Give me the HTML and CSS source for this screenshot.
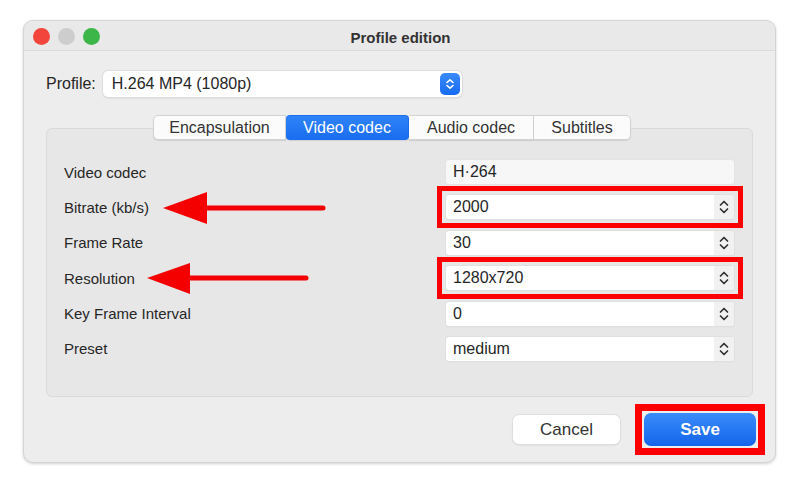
FILE: index.html
```html
<!DOCTYPE html>
<html lang="en">
<head>
    <meta charset="UTF-8">
    <meta name="viewport" content="width=device-width, initial-scale=1.0">
    <title>Profile edition</title>
    <link rel="stylesheet" href="styles.css">
</head>
<body>

    <!-- Dialog Window -->
    <div class="window">
        <div class="titlebar">
            <div class="lights">
                <span class="light red"></span>
                <span class="light gray"></span>
                <span class="light green"></span>
            </div>
            <span class="title">Profile edition</span>
        </div>

        <!-- Profile Select -->
        <div class="profile-row">
            <span class="profile-label">Profile:</span>
            <div class="profile-select">
                <span>H.264 MP4 (1080p)</span>
                <span class="select-btn">
                    <svg width="10" height="12" viewBox="0 0 10 12"><path d="M2 4.5 L5 1.8 L8 4.5 M2 7.5 L5 10.2 L8 7.5" fill="none" stroke="#fff" stroke-width="1.6" stroke-linecap="round" stroke-linejoin="round"/></svg>
                </span>
            </div>
        </div>

        <!-- Tabs -->
        <div class="tabs">
            <span class="tab tab-encap">Encapsulation</span>
            <span class="tab tab-video active">Video codec</span>
            <span class="tab tab-audio">Audio codec</span>
            <span class="tab tab-subs">Subtitles</span>
        </div>

        <!-- Settings Panel -->
        <div class="panel">
            <div class="row">
                <span class="label">Video codec</span>
                <div class="field plain">H·264</div>
            </div>
            <div class="row">
                <span class="label">Bitrate (kb/s)</span>
                <div class="mark">
                    <div class="field">2000<span class="stepper"></span></div>
                </div>
            </div>
            <div class="row">
                <span class="label">Frame Rate</span>
                <div class="field">30<span class="stepper"></span></div>
            </div>
            <div class="row">
                <span class="label">Resolution</span>
                <div class="mark">
                    <div class="field">1280x720<span class="stepper"></span></div>
                </div>
            </div>
            <div class="row">
                <span class="label">Key Frame Interval</span>
                <div class="field">0<span class="stepper"></span></div>
            </div>
            <div class="row">
                <span class="label">Preset</span>
                <div class="field">medium<span class="stepper"></span></div>
            </div>
        </div>

        <!-- Buttons -->
        <div class="footer">
            <button class="btn-cancel">Cancel</button>
            <div class="save-mark">
                <button class="btn-save">Save</button>
            </div>
        </div>
    </div>

    <!-- Annotation arrows -->
    <svg class="arrows" width="800" height="489" viewBox="0 0 800 489">
        <line x1="200" y1="208" x2="323" y2="208" stroke="#f40000" stroke-width="5" stroke-linecap="round"/>
        <polygon points="163,208 207,192 207,224" fill="#f40000"/>
        <line x1="185" y1="278" x2="306" y2="278" stroke="#f40000" stroke-width="5" stroke-linecap="round"/>
        <polygon points="147,278 190,263 190,294" fill="#f40000"/>
    </svg>

</body>
</html>
```

FILE: styles.css
```css
* {
    margin: 0;
    padding: 0;
    box-sizing: border-box;
}

body {
    font-family: 'Liberation Sans', Arial, sans-serif;
    background-color: #ffffff;
    color: #262626;
    width: 800px;
    height: 489px;
    overflow: hidden;
    position: relative;
}

/* Window */
.window {
    margin: 20px 0 0 23px;
    width: 753px;
    height: 443px;
    background-color: #ededed;
    border: 1px solid #d4d4d4;
    border-radius: 10px;
    box-shadow: 0 1px 3px rgba(0, 0, 0, 0.18);
    display: flex;
    flex-direction: column;
}

.titlebar {
    height: 30px;
    position: relative;
    display: flex;
    align-items: center;
    justify-content: center;
    padding-top: 3px;
    border-bottom: 1px solid #dadada;
    background-color: #e9e9e9;
    border-radius: 10px 10px 0 0;
}

.lights {
    position: absolute;
    left: 9px;
    top: 7px;
    display: flex;
    gap: 8px;
}

.light {
    width: 17px;
    height: 17px;
    border-radius: 50%;
}

.light.red {
    background-color: #f2463c;
}

.light.gray {
    background-color: #cdcdcd;
}

.light.green {
    background-color: #3cb648;
}

.title {
    font-size: 15px;
    font-weight: bold;
    color: #333;
    margin-left: 2px;
}

/* Profile row */
.profile-row {
    display: flex;
    align-items: center;
    gap: 7px;
    padding: 20px 0 0 22px;
}

.profile-label {
    font-size: 16px;
}

.profile-select {
    width: 359px;
    height: 26px;
    background-color: #ffffff;
    border-radius: 5px;
    box-shadow: 0 0 0 1px #dcdcdc, 0 1px 2px rgba(0, 0, 0, 0.15);
    display: flex;
    align-items: center;
    justify-content: space-between;
    padding: 0 2px 0 9px;
    font-size: 16px;
}

.select-btn {
    width: 20px;
    height: 22px;
    border-radius: 5px;
    background: linear-gradient(#3b8bfa, #176bf0);
    display: flex;
    align-items: center;
    justify-content: center;
}

/* Tabs */
.tabs {
    display: flex;
    margin: 18px 0 0 129px;
    position: relative;
    z-index: 1;
    height: 25px;
}

.tab {
    height: 25px;
    display: flex;
    align-items: center;
    justify-content: center;
    font-size: 16px;
    color: #333;
    background-color: #fbfbfb;
    border: 1px solid #d2d2d2;
    border-left: none;
    box-shadow: 0 1px 1px rgba(0, 0, 0, 0.1);
}

.tab-encap {
    width: 133px;
    border-left: 1px solid #d2d2d2;
    border-radius: 5px 0 0 5px;
}

.tab-video {
    width: 123px;
}

.tab-audio {
    width: 125px;
}

.tab-subs {
    width: 97px;
    border-radius: 0 5px 5px 0;
}

.tab.active {
    background: linear-gradient(#2f83f8, #1a6ef0);
    color: #ffffff;
    border-color: #1a6ef0;
    border-radius: 4px;
}

/* Panel */
.panel {
    margin: -12px 22px 0 22px;
    height: 269px;
    background-color: #e7e7e7;
    border: 1px solid #dadada;
    border-radius: 6px;
    padding: 31px 18px 0 17px;
    display: flex;
    flex-direction: column;
    gap: 11.4px;
}

.row {
    display: flex;
    align-items: center;
    justify-content: space-between;
    height: 24px;
}

.label {
    font-size: 15px;
    color: #262626;
}

.field {
    width: 288px;
    height: 24px;
    background-color: #ffffff;
    border-radius: 3px;
    box-shadow: 0 0 0 1px #e0e0e0, 0 1px 1px rgba(0, 0, 0, 0.12);
    font-size: 16px;
    padding-left: 7px;
    display: flex;
    align-items: center;
    justify-content: space-between;
}

.field.plain {
    background-color: #f7f7f7;
    box-shadow: 0 0 0 1px #e4e4e4;
}

/* Red highlight boxes */
.mark {
    outline: 5px solid #ff0000;
    outline-offset: 4px;
}

.stepper {
    width: 20px;
    height: 24px;
    background-color: #f1f1f1;
    border-radius: 0 3px 3px 0;
    background-image: url("data:image/svg+xml,%3Csvg xmlns='http://www.w3.org/2000/svg' width='20' height='24'%3E%3Cpath d='M6.5 10 L10 6.5 L13.5 10 M6.5 14 L10 17.5 L13.5 14' fill='none' stroke='%23333' stroke-width='1.7' stroke-linecap='round' stroke-linejoin='round'/%3E%3C/svg%3E");
}

/* Footer */
.footer {
    display: flex;
    justify-content: flex-end;
    align-items: center;
    gap: 24px;
    padding: 16px 19px 0 0;
}

.btn-cancel, .btn-save {
    font-family: 'Liberation Sans', Arial, sans-serif;
    font-size: 17px;
    border: none;
    cursor: pointer;
}

.btn-cancel {
    width: 107px;
    height: 29px;
    background-color: #ffffff;
    color: #333;
    border-radius: 6px;
    box-shadow: 0 0 0 1px #dedede, 0 1px 2px rgba(0, 0, 0, 0.15);
}

.save-mark {
    display: flex;
    outline: 7px solid #ff0000;
    outline-offset: 2px;
}

.btn-save {
    width: 112px;
    height: 33px;
    background: linear-gradient(#3a8cfa, #1465ea);
    color: #ffffff;
    font-weight: bold;
    border-radius: 7px;
}

/* Annotation overlay */
.arrows {
    position: absolute;
    top: 0;
    left: 0;
    pointer-events: none;
}
```
